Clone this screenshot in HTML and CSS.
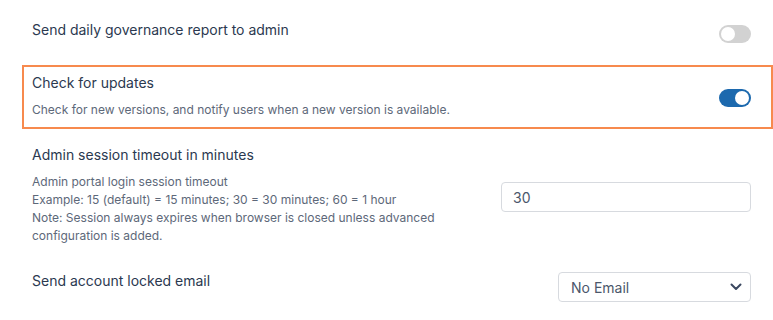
FILE: index.html
```html
<!DOCTYPE html>
<html lang="en">
<head>
    <meta charset="UTF-8">
    <meta name="viewport" content="width=device-width, initial-scale=1.0">
    <title>Settings</title>
    <link rel="stylesheet" href="styles.css">
</head>
<body>
    <div class="settings">
        <div class="setting-row first">
            <div class="setting-text">
                <div class="setting-title">Send daily governance report to admin</div>
            </div>
            <label class="toggle">
                <input type="checkbox">
                <span class="slider"></span>
            </label>
        </div>

        <div class="setting-row highlight">
            <div class="setting-text">
                <div class="setting-title">Check for updates</div>
                <div class="setting-desc">Check for new versions, and notify users when a new version is available.</div>
            </div>
            <label class="toggle">
                <input type="checkbox" checked>
                <span class="slider"></span>
            </label>
        </div>

        <div class="setting-row timeout">
            <div class="setting-text narrow">
                <div class="setting-title">Admin session timeout in minutes</div>
                <div class="setting-desc">
                    Admin portal login session timeout<br>
                    Example: 15 (default) = 15 minutes; 30 = 30 minutes; 60 = 1 hour<br>
                    Note: Session always expires when browser is closed unless advanced configuration is added.
                </div>
            </div>
            <input type="text" class="text-input" value="30">
        </div>

        <div class="setting-row locked">
            <div class="setting-text">
                <div class="setting-title">Send account locked email</div>
            </div>
            <div class="select-wrap">
                <select class="select-input">
                    <option>No Email</option>
                    <option>Send Email</option>
                </select>
                <svg class="chevron" width="12" height="8" viewBox="0 0 12 8">
                    <path d="M1.5 1.5 L6 6 L10.5 1.5" fill="none" stroke="#3b4860" stroke-width="2" stroke-linecap="round" stroke-linejoin="round"/>
                </svg>
            </div>
        </div>
    </div>
</body>
</html>
```

FILE: styles.css
```css
body {
    font-family: 'Inter', 'Noto Sans', sans-serif;
    margin: 0;
    padding: 0;
    background-color: #fff;
    color: #2b3950;
}
.settings {
    padding-left: 32px;
    width: 719px;
}
.setting-row {
    display: flex;
    justify-content: space-between;
    align-items: flex-start;
}
.setting-title {
    font-size: 14px;
    line-height: 20px;
    color: #2b3950;
}
.setting-desc {
    font-size: 12px;
    line-height: 18px;
    color: #5d6879;
    margin-top: 8px;
}
.setting-row.first {
    padding: 20px 0 22px;
}
.setting-row.first .toggle {
    margin-top: 5px;
}
.setting-row.highlight {
    align-items: center;
    border: 2px solid #f78a4e;
    margin: 0 -22px 0 -10px;
    padding: 6px 20px 8px 8px;
}
.setting-row.highlight .toggle {
    margin-top: 3px;
}
.setting-row.timeout {
    align-items: center;
    padding-top: 16px;
}
.setting-row.timeout .text-input {
    margin-top: 4px;
}
.setting-text.narrow {
    width: 440px;
}
.setting-row.locked {
    padding-top: 26px;
}
.toggle {
    position: relative;
    display: inline-block;
    width: 32px;
    height: 18px;
    flex-shrink: 0;
}
.toggle input {
    display: none;
}
.slider {
    position: absolute;
    top: 0;
    left: 0;
    right: 0;
    bottom: 0;
    background-color: #d2d2d2;
    border-radius: 9px;
    cursor: pointer;
}
.slider:before {
    content: "";
    position: absolute;
    width: 14px;
    height: 14px;
    left: 2px;
    top: 2px;
    background-color: #fff;
    border-radius: 50%;
}
.toggle input:checked + .slider {
    background-color: #1c69ae;
}
.toggle input:checked + .slider:before {
    left: 16px;
}
.text-input {
    width: 250px;
    height: 30px;
    box-sizing: border-box;
    border: 1px solid #d7dadf;
    border-radius: 4px;
    padding: 0 11px;
    font-family: 'Inter', 'Noto Sans', sans-serif;
    font-size: 14px;
    color: #4b576b;
}
.select-wrap {
    position: relative;
    margin-top: 1px;
}
.select-input {
    appearance: none;
    -webkit-appearance: none;
    width: 193px;
    height: 30px;
    box-sizing: border-box;
    border: 1px solid #d7dadf;
    border-radius: 4px;
    background: #fff;
    padding: 0 12px;
    font-family: 'Inter', 'Noto Sans', sans-serif;
    font-size: 14px;
    color: #4b576b;
}
.chevron {
    position: absolute;
    right: 9px;
    top: 11px;
    pointer-events: none;
}
```
